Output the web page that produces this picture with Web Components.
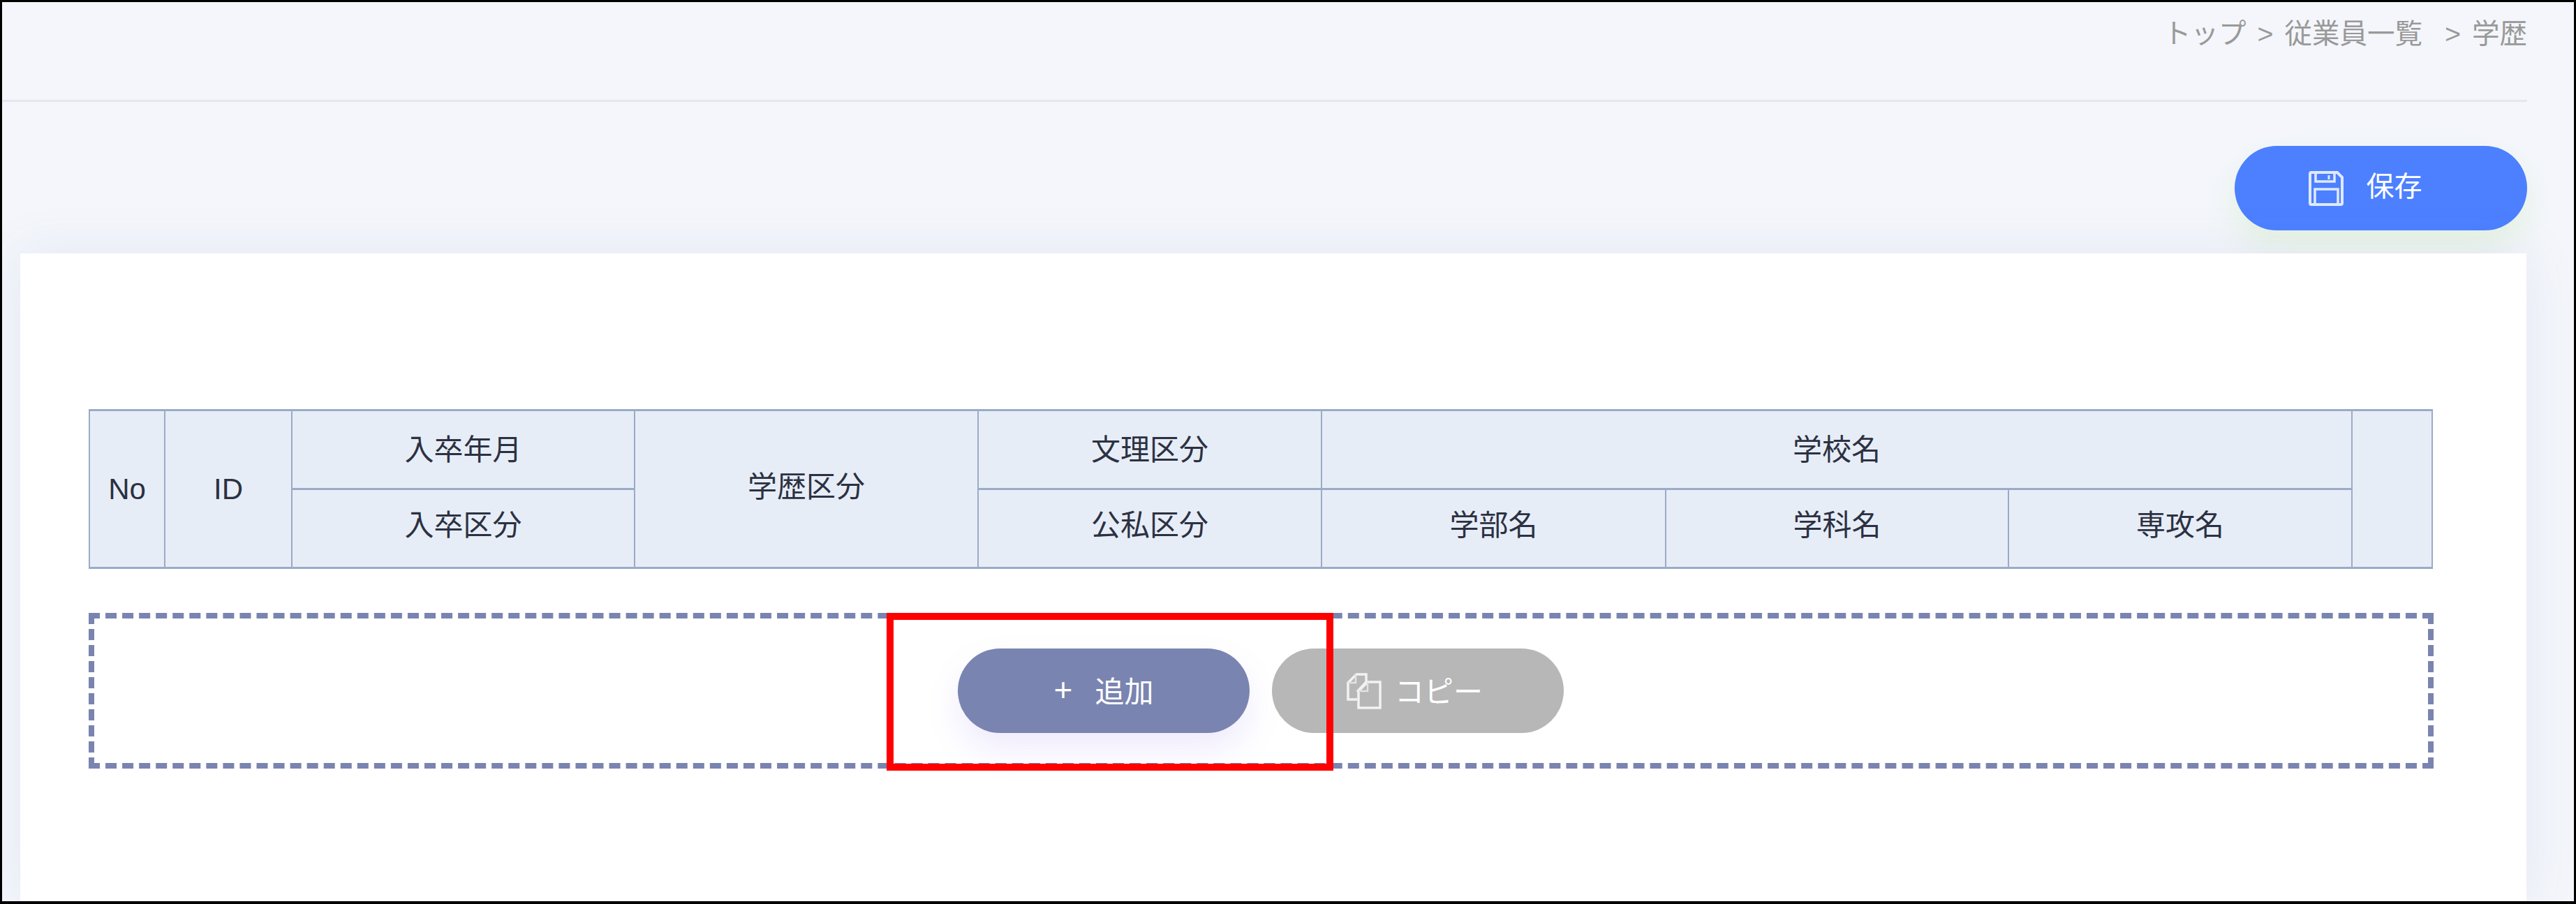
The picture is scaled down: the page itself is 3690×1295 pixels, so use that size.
<!DOCTYPE html>
<html lang="ja"><head><meta charset="utf-8"><style>
html,body{margin:0;padding:0;background:#f4f6fb}
body{font-family:"Liberation Sans","Noto Sans CJK JP",sans-serif}
</style></head><body>
<app-frame>
  <bread-crumbs slot="top"></bread-crumbs>
  <save-bar slot="top"></save-bar>
  <content-panel>
    <edu-table></edu-table>
    <action-box></action-box>
  </content-panel>
</app-frame>
<script>
const F='"Liberation Sans","Noto Sans CJK JP",sans-serif';
function def(name,html){customElements.define(name,class extends HTMLElement{constructor(){super();this.attachShadow({mode:'open'}).innerHTML=html}})}
def('app-frame',`<style>:host{display:flex;flex-direction:column;box-sizing:border-box;width:3690px;height:1295px;border:3px solid #000;border-bottom-width:4px;background:#f4f6fb;overflow:hidden;font-family:${F}}</style><slot name="top"></slot><slot></slot>`);
def('bread-crumbs',`<style>:host{display:block;box-sizing:border-box;height:143px;width:3617px;border-bottom:3px solid #e3e7f1;padding-top:20px;text-align:right;font-size:39.500px;line-height:50px;color:#999;white-space:pre;word-spacing:5px}</style>トップ &gt; 従業員一覧 &nbsp;&gt; 学歴`);
def('pill-button',`<style>:host{display:inline-flex;align-items:center;justify-content:center;box-sizing:border-box;height:121px;width:var(--w,418px);border-radius:60.5px;color:#fff;font-size:var(--fs,40px);background:var(--bg);box-shadow:var(--sh,none);font-family:${F}}</style><slot></slot>`);
def('save-bar',`<style>:host{display:flex;justify-content:flex-end;box-sizing:border-box;width:3617px;height:217px;padding-top:63px}
pill-button{--bg:#4c80ff;--w:419px;--sh:0 22px 44px rgba(190,235,160,.28);padding-right:45px}
svg{width:50px;height:50px;margin-right:33px;flex:none}span{position:relative;top:-6px}</style>
<pill-button><svg viewBox="0 0 50 50" fill="none" stroke="#dfe9ff" stroke-width="4"><path d="M2 4a2 2 0 0 1 2-2h37l7 7v37a2 2 0 0 1-2 2H4a2 2 0 0 1-2-2z"/><path d="M10 3v12h27V3" stroke-width="3.500"/><path d="M29 6v6" stroke-width="3"/><path d="M9 48V26h33v22" stroke-width="3.500"/></svg><span>保存</span></pill-button>`);
def('content-panel',`<style>:host{display:block;box-sizing:border-box;flex:1;margin-left:26px;width:3590px;background:#fff;box-shadow:0 0 70px rgba(90,110,180,.10);padding:223px 133px 0 98px}</style><slot></slot>`);
const cols=[108,182,491,492,492,493,491,492,115];
def('edu-table',`<style>:host{display:block}
table{border-collapse:collapse;table-layout:fixed;width:3356px;font-size:42px;color:#2c3142}
td{box-sizing:border-box;background:#e7edf7;border:2px solid #9aabc8;border-top-width:3px;border-bottom-width:3px;padding:0;text-align:center;height:113px;font-weight:400}
.r1{padding-bottom:8px}.r2{padding-bottom:18px}.rs{padding-bottom:14px}
</style><table><colgroup>${cols.map(w=>`<col style="width:${w}px">`).join('')}</colgroup>
<tr><td rowspan="2">No</td><td rowspan="2">ID</td><td class="r1">入卒年月</td><td rowspan="2" class="rs">学歴区分</td><td class="r1">文理区分</td><td colspan="3" class="r1">学校名</td><td rowspan="2"></td></tr>
<tr><td class="r2">入卒区分</td><td class="r2">公私区分</td><td class="r2">学部名</td><td class="r2">学科名</td><td class="r2">専攻名</td></tr></table>`);
def('action-box',`<style>:host{display:flex;position:relative;justify-content:center;gap:32px;box-sizing:border-box;width:3359px;height:223px;margin-top:63px;border:8px dashed #7a84b0;padding-top:43px;padding-right:1px;--fs:42px}
.a{--bg:#7a84b0;--sh:0 24px 48px rgba(130,100,235,.13)}.c{--bg:#b7b7b7;padding-right:9px}
b{font-weight:400}.p{margin-right:32px;font-size:46px}
svg{width:50px;height:52px;margin-right:19px;flex:none}
span,b{position:relative;top:-2px}
.red{position:absolute;left:1135px;top:-8px;width:640px;height:226px;box-sizing:border-box;border:10px solid #f00}
</style>
<pill-button class="a"><b class="p">+</b><b>追加</b></pill-button>
<pill-button class="c"><svg viewBox="0 0 50 52" fill="none" stroke="#f2f2f2" stroke-width="3.500"><path d="M15 27 28 13V2H14L2 14v24h13"/><path d="M2 14h11V2" stroke-width="2.500" stroke="#e2e2e2"/><path d="M30 13h18v37H17V26z"/><path d="M17 26h13V13" stroke-width="2.500" stroke="#e2e2e2"/></svg><span>コピー</span></pill-button>
<div class="red"></div>`);
</script></body></html>
